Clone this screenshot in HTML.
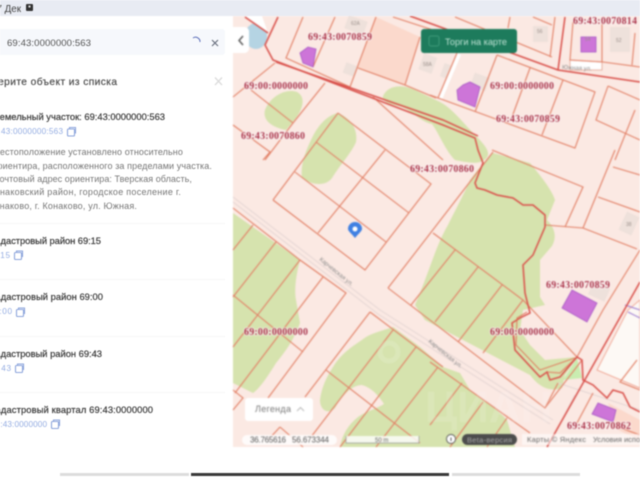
<!DOCTYPE html>
<html lang="ru"><head><meta charset="utf-8"><title>Карта</title>
<style>
html,body{margin:0;padding:0;width:640px;height:480px;overflow:hidden;background:#fff}
svg{display:block;filter:blur(.4px)}
text{font-family:"Liberation Sans","DejaVu Sans",sans-serif}
.lb{font-family:"Liberation Serif","DejaVu Serif",serif;font-weight:bold;font-size:10px;fill:#a82c42;stroke:#fff;stroke-width:1.6px;paint-order:stroke;stroke-opacity:.75}
.h{font-size:9.4px;fill:#3f3f3f;stroke:#3f3f3f;stroke-width:.22px}
.b{font-size:8.2px;fill:#95ade2}
.d{font-size:9px;fill:#777;letter-spacing:.1px}
.r{font-size:6px;fill:#8b8b8b}
.bl{font-size:5px;fill:#9a8f8a}
.o{fill:none;stroke:#e28066;stroke-width:1.1}
.rd{fill:none;stroke:#d9504a;stroke-width:1.5}
.g{fill:#d6e3ae}
.bd{fill:#cd75d8;stroke:#a658c4;stroke-width:.8}
.gb{fill:#eee1db}
.ic{fill:none;stroke:#8ea6dc;stroke-width:1.1}
</style></head><body>
<svg width="640" height="480" viewBox="0 0 640 480" xmlns="http://www.w3.org/2000/svg">
<rect width="640" height="480" fill="#fff"/>
<!-- map -->
<svg x="233" y="16" width="407" height="431" viewBox="233 16 407 431">
<rect x="233" y="16" width="407" height="431" fill="#fbe9e3"/>
<ellipse cx="256" cy="36" rx="11" ry="13" fill="#b5d4e3"/>
<polygon points="245,16 262,16 268,33" fill="#fff"/>
<polygon points="376,17 420,37 405,85 358,68" fill="#fbd9cc"/>
<polygon points="608,403 640,420 640,440 618,430" fill="#fbd9cc"/>
<!-- green -->
<path class="g" d="M265 110C270 97 285 88 297 92C306 97 303 108 296 118L286 130C275 128 262 122 265 110Z"/>
<path class="g" d="M338 113C350 118 358 128 356 142C352 152 340 165 332 178C325 187 312 185 302 178C300 165 306 150 312 138C318 125 328 115 338 113Z"/>
<path class="g" d="M383 96C388 85 402 84 415 90L440 102C452 108 465 125 475 135C488 148 492 155 484 160C478 165 465 162 455 160C445 150 440 135 432 124C420 122 410 108 398 106C390 104 382 102 383 96Z"/>
<path class="g" d="M493 153L530 163C540 175 552 190 555 200L547 220C555 228 557 237 552 246L540 260L540 297L545 305L523 310L520 330L530 345L545 360L577 357L565 375L562 388C550 392 540 388 530 375L505 362L463 340L425 320L415 305C430 270 436 245 448 225C458 205 466 190 470 180C478 170 485 160 493 153Z"/>
<polygon points="577,358 582,378 563,380" fill="#c9edb0"/>
<path class="g" d="M233 213L300 260C296 275 294 290 296 300L300 323C294 340 285 352 276 363C268 376 260 388 253 393L233 383Z"/>
<path class="g" d="M393 327L420 347L443 367L460 373L470 390C485 400 500 412 507 420L515 447L340 447C342 435 348 425 358 417C365 412 378 408 384 404C378 395 372 388 362 385C352 385 342 395 335 408C328 415 320 410 320 400C322 385 328 375 333 367C342 352 355 345 366 337C375 332 385 330 393 327Z"/>
<!-- grey buildings -->
<rect class="gb" x="346" y="18" width="20" height="14" transform="rotate(20 356 25)"/>
<rect class="gb" x="344" y="64" width="12" height="11" transform="rotate(20 350 70)"/>
<rect class="gb" x="421" y="55" width="14" height="17" transform="rotate(20 428 63)"/>
<rect class="gb" x="533" y="26" width="15" height="16"/>
<rect class="gb" x="610" y="27" width="20" height="25"/>
<rect class="gb" x="622" y="214" width="14" height="20" transform="rotate(25 630 224)"/>
<rect class="gb" x="472" y="75" width="16" height="14" transform="rotate(20 480 82)"/>
<rect class="gb" x="442" y="64" width="9" height="14" transform="rotate(20 446 71)"/>
<rect class="gb" x="590" y="285" width="18" height="14" transform="rotate(25 600 292)"/>
<!-- whites -->
<polygon points="628,310 640,300 640,388 597,370" fill="#fdf9f5" stroke="#ee9c88" stroke-width=".8"/>
<polygon points="570,60 602,62 602,70 570,70" fill="#fff" stroke="#e2a28f" stroke-width=".8"/>
<polygon points="457,53 461,55 442,100 438,98" fill="#fff"/>
<!-- road grey -->
<path d="M233 197L380 310L553 420M233 202L378 314L550 424M558 383L640 410M548 447L575 395" fill="none" stroke="#e5d6d4" stroke-width="1"/>
<!-- orange parcels -->
<path class="o" d="M233 97L275 63M251 90L293 123M293 123L325 83M293 123L265 160M233 125L270 152L263 160M338 113L273 200M338 113L431 184L365 270L273 200M316 142L409 213M295 172L386 242M385 150L318 233M303 17L286 58L350 87L376 17M335 17L313 67M358 68L405 85L436 98M405 85L420 37M393 17L433 30M373 97L443 160"/>
<path class="o" d="M233 208L300 260L346 293L268 398M253 225L233 250M276 242L233 297M300 260L233 347M323 277L235 393M233 295L303 352M233 390L243 398L233 410M280 427L303 447M280 427L268 440M370 312L443 367M370 312L305 397M393 330L311 437M416 347L340 447M438 367L376 447M326 370L420 443"/>
<path class="o" d="M388 288L493 152M388 288L545 408L582 360M433 233L523 300L577 357M455 250L411 305M478 267L435 322M502 285L458 342M523 300L483 353M558 383L545 408M547 372L560 373L577 357M430 362L530 433M507 418L487 447M483 402L450 447M462 383L430 425"/>
<path class="o" d="M455 17L552 57M510 17L508 28M533 17L552 25M555 17L550 57M497 55L595 92L575 148L430 95M497 55L475 112M530 68L512 117M563 80L542 135M457 53L438 98M608 86L640 100M608 86L596 120L640 140M635 110L615 160M573 22L570 60L603 62L640 67M602 23L602 62M635 33L632 65"/>
<path class="o" d="M492 150L583 187L565 227M545 225L583 228L637 249M615 150L583 228M598 197L640 212M613 167L640 175M640 250L603 310L577 357M593 393L577 423M618 427L640 435M637 360L620 382L640 390"/>
<path d="M625 305L640 310M640 318L628 312" fill="none" stroke="#9c7bd0" stroke-width="1"/>
<!-- red -->
<path class="rd" d="M245 17L268 33M278 17L265 45L273 60L443 125L475 138L478 150L483 163L475 183L477 188L485 190L497 195L513 198L523 205L533 205L545 215L545 227L533 255L523 265L525 293L530 313L520 318L512 323L515 350L540 377L547 372L550 380L560 377L577 357L582 360L583 380L593 385L607 398L613 390L623 393L630 407L640 412"/>
<path class="rd" d="M276 62L443 120L478 136M410 16L558 70L640 82M565 17L558 70M640 282L547 447"/>
<path d="M527 312L517 318L516 345L540 370L575 358" fill="none" stroke="#e06a50" stroke-width=".9"/>
<!-- buildings -->
<polygon class="bd" points="300,53 308,47 316,49 313,67 303,63"/>
<polygon class="bd" points="457,90 463,85 470,82 480,87 475,107 458,100"/>
<rect class="bd" x="581" y="37" width="15" height="15"/>
<polygon class="bd" points="572,290 597,303 587,322 562,308"/>
<polygon class="bd" points="598,403 616,410 613,422 592,414"/>
<!-- building numbers -->
<text class="bl" x="351" y="25">62А</text><text class="bl" x="423" y="66">58А</text><text class="bl" x="537" y="33">56</text><text class="bl" x="616" y="42">52</text><text class="bl" x="626" y="226">38</text><text class="bl" x="585" y="41">54</text>
<!-- road labels -->
<text class="r" transform="translate(319 260) rotate(39)">Карчевская ул.</text>
<text class="r" transform="translate(428 342) rotate(39)">Карчевская ул.</text>
<text class="r" transform="translate(562 69) rotate(3)">Южная ул.</text>
<!-- watermark -->
<text x="425" y="422" font-size="44" fill="#fff" opacity=".12" font-weight="bold">ЦИАН</text>
<circle cx="389" cy="352" r="9" fill="none" stroke="#fff" stroke-width="5" opacity=".14"/>
<!-- labels -->
<text class="lb" x="308" y="40" textLength="64">69:43:0070859</text>
<text class="lb" x="244" y="89" textLength="64">69:00:0000000</text>
<text class="lb" x="241" y="139" textLength="64">69:43:0070860</text>
<text class="lb" x="490" y="89" textLength="64">69:00:0000000</text>
<text class="lb" x="496" y="122" textLength="64">69:43:0070859</text>
<text class="lb" x="573" y="24" textLength="64">69:43:0070814</text>
<text class="lb" x="410" y="172" textLength="64">69:43:0070860</text>
<text class="lb" x="546" y="288" textLength="64">69:43:0070859</text>
<text class="lb" x="244" y="335" textLength="64">69:00:0000000</text>
<text class="lb" x="490" y="335" textLength="64">69:00:0000000</text>
<text class="lb" x="567" y="429" textLength="64">69:43:0070862</text>
<!-- pin -->
<path d="M355 238C351 233 348 231 348 229A7 7 0 0 1 362 229C362 231 359 233 355 238Z" fill="#3f80e2"/>
<circle cx="355" cy="229" r="2.5" fill="#fff"/>
<!-- controls -->
<path d="M233 27H245a5 5 0 0 1 4 4V49a5 5 0 0 1-4 4H233Z" fill="#fff"/>
<path d="M243 36L239 40.500L243 45" fill="none" stroke="#555" stroke-width="1.4"/>
<rect x="421" y="29" width="96" height="24" rx="3" fill="#1d7b5c"/>
<rect x="429" y="36" width="10" height="10" rx="2" fill="none" stroke="#3d9a7a" stroke-width="1"/>
<text x="445" y="45" font-size="9.2" fill="#bfe3d4" textLength="62">Торги на карте</text>
<rect x="245" y="398" width="68" height="23" rx="3" fill="#fff"/>
<text x="255" y="412" font-size="9" fill="#777" textLength="36">Легенда</text>
<path d="M297 411L300.500 407.500L304 411" fill="none" stroke="#bbb" stroke-width="1"/>
<rect x="242" y="435" width="95" height="10" rx="5" fill="#fff" opacity=".85"/>
<text x="250" y="442.500" font-size="8" fill="#555" textLength="36">36.765616</text>
<text x="292" y="442.500" font-size="8" fill="#555" textLength="37">56.673344</text>
<rect x="346" y="436" width="73" height="7" fill="#fff" opacity=".8"/>
<path d="M346 436V443H419V436" fill="none" stroke="#999" stroke-width=".7"/>
<text x="375" y="442" font-size="6" fill="#666">50 m</text>
<circle cx="451" cy="439" r="4.500" fill="#fff" stroke="#555" stroke-width=".9"/>
<rect x="450.500" y="437.500" width="1" height="3.500" fill="#555"/>
<rect x="462" y="434" width="55" height="11" rx="5.500" fill="#4c4c4c"/>
<text x="467" y="442.500" font-size="7.500" fill="#a8a8a8" textLength="45">Beta-версия</text>
<rect x="522" y="434" width="118" height="11" fill="#fff" opacity=".55"/>
<text x="527" y="442" font-size="7.500" fill="#666" textLength="59">Карты © Яндекс</text>
<text x="593" y="442" font-size="7.500" fill="#666">Условия использования</text>
</svg>
<!-- top bar -->
<rect width="640" height="16" fill="#e8ebf3"/>
<text x="21" y="12" text-anchor="end" font-size="9.800" fill="#444">7 Дек</text>
<rect x="26" y="4" width="7" height="7" rx="1" fill="#333"/>
<rect x="28.500" y="5.500" width="2" height="2" fill="#ddd"/>
<!-- search -->
<rect x="-4" y="29" width="229" height="26" rx="3" fill="#f6f8fc"/>
<text x="7" y="46" font-size="9.600" fill="#555" textLength="84">69:43:0000000:563</text>
<path d="M193 38A4.500 4.500 0 0 1 200 42" fill="none" stroke="#5a6cb8" stroke-width="1"/>
<path d="M212 40L218 46M218 40L212 46" stroke="#6b7280" stroke-width="1.200"/>
<!-- panel -->
<text class="h" x="-23" y="85" textLength="140" style="font-size:10.200px;fill:#555;stroke:#555">Выберите объект из списка</text>
<path d="M215 77.500L222 85M222 77.500L215 85" stroke="#dcdcdc" stroke-width="1.300"/>
<text class="h" x="-6" y="120" textLength="171">Земельный участок: 69:43:0000000:563</text>
<text class="b" x="-11" y="134" textLength="74">69:43:0000000:563</text>
<rect class="ic" x="67.500" y="129" width="7" height="7" rx="1"/><path class="ic" d="M69.500 129V127.500H75.500V133.500"/>
<text class="d" x="183" y="155" text-anchor="end">Местоположение установлено относительно</text>
<text class="d" x="212" y="169" text-anchor="end">ориентира, расположенного за пределами участка.</text>
<text class="d" x="-7" y="182" textLength="199">Почтовый адрес ориентира: Тверская область,</text>
<text class="d" x="-11" y="195" textLength="192">Конаковский район, городское поселение г.</text>
<text class="d" x="-11" y="209" textLength="148">Конаково, г. Конаково, ул. Южная.</text>
<rect x="0" y="223" width="225" height="1" fill="#f6f6f6"/>
<text class="h" x="-10" y="244" textLength="111">Кадастровый район 69:15</text>
<text class="b" x="-13" y="258" textLength="23">69:15</text>
<rect class="ic" x="14.500" y="252.500" width="7" height="7" rx="1"/><path class="ic" d="M16.500 252.500V251H22.500V257"/>
<rect x="0" y="279" width="225" height="1" fill="#f6f6f6"/>
<text class="h" x="-10" y="300" textLength="113">Кадастровый район 69:00</text>
<text class="b" x="-11" y="314" textLength="23">69:00</text>
<rect class="ic" x="16.500" y="309.500" width="7" height="7" rx="1"/><path class="ic" d="M18.500 309.500V308H24.500V314"/>
<rect x="0" y="336" width="225" height="1" fill="#f6f6f6"/>
<text class="h" x="-10" y="357" textLength="112">Кадастровый район 69:43</text>
<text class="b" x="-12" y="371" textLength="23">69:43</text>
<rect class="ic" x="15.500" y="365.500" width="7" height="7" rx="1"/><path class="ic" d="M17.500 365.500V364H23.500V370"/>
<rect x="0" y="392" width="225" height="1" fill="#f6f6f6"/>
<text class="h" x="-10" y="413" textLength="163">Кадастровый квартал 69:43:0000000</text>
<text class="b" x="-9" y="427" textLength="56">69:43:0000000</text>
<rect class="ic" x="51.500" y="421.500" width="7" height="7" rx="1"/><path class="ic" d="M53.500 421.500V420H59.500V426"/>
<!-- bottom bar -->
<rect x="60" y="473" width="129" height="3" fill="#dcdcdc"/>
<rect x="191" y="473" width="258" height="3" fill="#3a3a3a"/>
<rect x="452" y="473" width="128" height="3" fill="#dcdcdc"/>
</svg>
</body></html>
